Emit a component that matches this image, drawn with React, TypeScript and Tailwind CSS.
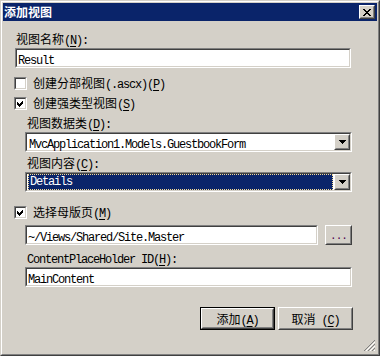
import type { ReactNode } from "react";

// Windows classic "添加视图" dialog

const CJK = /[\u3000-\u303f\u4e00-\u9fff\uff00-\uffef]+|[^\u3000-\u303f\u4e00-\u9fff\uff00-\uffef]+/g;

function Runs({ s }: { s: string }) {
  const parts = s.match(CJK) ?? [];
  return (
    <>
      {parts.map((p, i) =>
        /[\u4e00-\u9fff]/.test(p) ? (
          <span key={i} className="font-['Noto_Sans_CJK_SC',sans-serif] text-[12px]">
            {p}
          </span>
        ) : (
          <span key={i} className="font-['Liberation_Mono',monospace] text-[12px] tracking-[-1.2px] whitespace-pre">
            {p}
          </span>
        )
      )}
    </>
  );
}

// "&X" marks the mnemonic letter
function Mn({ text }: { text: string }) {
  const i = text.indexOf("&");
  if (i < 0) return <span><Runs s={text} /></span>;
  return (
    <span className="whitespace-nowrap">
      <Runs s={text.slice(0, i)} />
      <span className="underline underline-offset-2">
        <Runs s={text.slice(i + 1, i + 2)} />
      </span>
      <Runs s={text.slice(i + 2)} />
    </span>
  );
}

function Sunken({ className, children }: { className?: string; children?: ReactNode }) {
  return (
    <div className={"border border-t-[#808080] border-l-[#808080] border-r-white border-b-white " + (className ?? "")}>
      <div className="h-full border border-t-[#404040] border-l-[#404040] border-r-[#d4d0c8] border-b-[#d4d0c8] bg-white flex items-center">
        {children}
      </div>
    </div>
  );
}

function Raised({ className, children }: { className?: string; children?: ReactNode }) {
  return (
    <div className={"border border-t-white border-l-white border-r-[#404040] border-b-[#404040] bg-[#d4d0c8] " + (className ?? "")}>
      <div className="h-full border border-t-[#d4d0c8] border-l-[#d4d0c8] border-r-[#808080] border-b-[#808080] flex items-center justify-center">
        {children}
      </div>
    </div>
  );
}

function Check({ checked }: { checked?: boolean }) {
  return (
    <Sunken className="w-[13px] h-[13px] shrink-0">
      {checked && (
        <svg width="9" height="9" viewBox="0 0 9 9" shapeRendering="crispEdges">
          <path d="M1 3h1v1h1v1h1v-1h1v-1h1v-1h1v3h-1v1h-1v1h-1v1h-1v-1h-1v-1h-1z" fill="#000" />
        </svg>
      )}
    </Sunken>
  );
}

function Arrow() {
  return (
    <svg width="7" height="4" viewBox="0 0 7 4" shapeRendering="crispEdges">
      <path d="M0 0h7v1h-1v1h-1v1h-1v1h-1v-1h-1v-1h-1v-1h-1z" fill="#000" />
    </svg>
  );
}

function Combo({ value, selected }: { value: string; selected?: boolean }) {
  return (
    <Sunken className="ml-[22px] w-[327px] h-[20px]">
      <div className="flex-1 h-full flex items-center pl-[1px] pr-[1px]">
        {selected ? (
          <div className="w-full h-full bg-[#0a246a] text-white border border-dotted border-[#f5db95] flex items-center pl-[1px] leading-none">
            <Runs s={value} />
          </div>
        ) : (
          <div className="pl-[1px] leading-none text-black">
            <Runs s={value} />
          </div>
        )}
      </div>
      <Raised className="w-[16px] h-full shrink-0">
        <Arrow />
      </Raised>
    </Sunken>
  );
}

export default function App() {
  return (
    <div className="w-[380px] h-[356px] bg-[#d4d0c8] border border-t-[#d4d0c8] border-l-[#d4d0c8] border-r-[#404040] border-b-[#404040] text-black relative">
      <div className="h-full border border-t-white border-l-white border-r-[#808080] border-b-[#808080] p-[1px] flex flex-col">
        {/* Title bar */}
        <div className="h-[18px] bg-[#0a246a] flex items-center justify-between pl-[1px] pr-[2px]">
          <span className="text-white font-bold font-['Noto_Sans_CJK_SC',sans-serif] text-[12px] leading-none">添加视图</span>
          <Raised className="w-[16px] h-[14px]">
            <svg width="8" height="7" viewBox="0 0 8 7" shapeRendering="crispEdges">
              <path d="M0 0h2v1h1v1h2v-1h1v-1h2v1h-1v1h-1v1h-1v1h1v1h1v1h1v1h-2v-1h-1v-1h-2v1h-1v1h-2v-1h1v-1h1v-1h1v-1h-1v-1h-1v-1h-1z" fill="#000" />
            </svg>
          </Raised>
        </div>

        {/* Body */}
        <div className="flex flex-col leading-[14px]">
          <div className="mt-[11px] ml-[13px] h-[14px] flex items-center">
            <Mn text="视图名称(&N):" />
          </div>
          <Sunken className="mt-[2px] ml-[12px] w-[336px] h-[20px]">
            <span className="pl-[1px] leading-none">
              <Runs s="Result" />
            </span>
          </Sunken>

          <div className="mt-[9px] ml-[11px] h-[13px] flex items-center gap-[6px]">
            <Check />
            <Mn text="创建分部视图(.ascx)(&P)" />
          </div>
          <div className="mt-[7px] ml-[11px] h-[13px] flex items-center gap-[6px]">
            <Check checked />
            <Mn text="创建强类型视图(&S)" />
          </div>

          <div className="mt-[6px] ml-[24px] h-[14px] flex items-center">
            <Mn text="视图数据类(&D):" />
          </div>
          <div className="mt-[2px]">
            <Combo value="MvcApplication1.Models.GuestbookForm" />
          </div>

          <div className="mt-[4px] ml-[24px] h-[14px] flex items-center">
            <Mn text="视图内容(&C):" />
          </div>
          <div className="mt-[2px]">
            <Combo value="Details" selected />
          </div>

          <div className="mt-[14px] ml-[11px] h-[13px] flex items-center gap-[6px]">
            <Check checked />
            <Mn text="选择母版页(&M)" />
          </div>

          <div className="mt-[6px] ml-[22px] flex gap-[7px]">
            <Sunken className="w-[293px] h-[20px]">
              <span className="pl-[1px] leading-none">
                <Runs s="~/Views/Shared/Site.Master" />
              </span>
            </Sunken>
            <Raised className="w-[27px] h-[20px]">
              <span className="font-['Liberation_Mono',monospace] text-[11px] text-[#500050] leading-none tracking-[-1px] pt-[3px]">...</span>
            </Raised>
          </div>

          <div className="mt-[6px] ml-[24px] h-[14px] flex items-center">
            <Mn text="ContentPlaceHolder ID(&H):" />
          </div>
          <Sunken className="mt-[2px] ml-[22px] w-[327px] h-[20px]">
            <span className="pl-[1px] leading-none">
              <Runs s="MainContent" />
            </span>
          </Sunken>

          <div className="mt-[20px] flex justify-end gap-[3px] pr-[24px]">
            <div className="border border-black">
              <Raised className="w-[73px] h-[21px]">
                <span className="leading-none">
                  <Mn text="添加(&A)" />
                </span>
              </Raised>
            </div>
            <Raised className="w-[75px] h-[23px]">
              <span className="leading-none">
                <Mn text="取消 (&C)" />
              </span>
            </Raised>
          </div>
        </div>
      </div>

      {/* Size grip */}
      <svg className="absolute right-[3px] bottom-[3px]" width="12" height="12" viewBox="0 0 12 12" shapeRendering="crispEdges">
        <path d="M11 0L0 11M11 4L4 11M11 8L8 11" stroke="#808080" strokeWidth="1.4" />
        <path d="M11 2L2 11M11 6L6 11M11 10L10 11" stroke="#ffffff" strokeWidth="1" />
      </svg>
    </div>
  );
}
